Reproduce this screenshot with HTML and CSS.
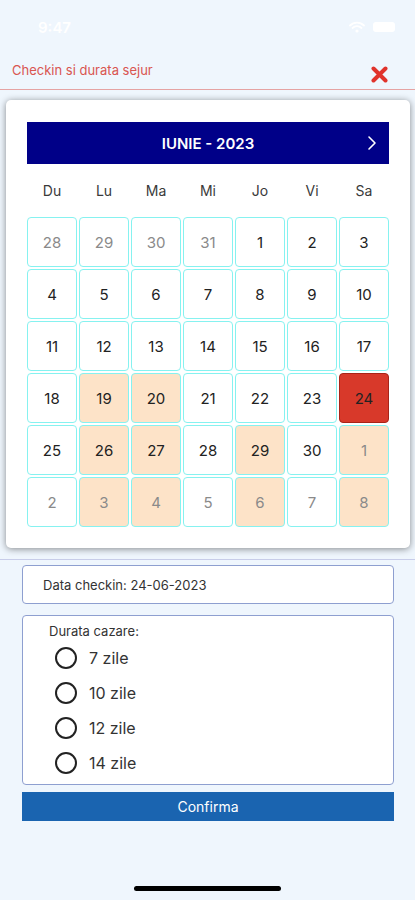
FILE: index.html
```html
<!DOCTYPE html>
<html lang="ro">
  <head>
    <meta charset="UTF-8" />
    <meta name="viewport" content="width=device-width, initial-scale=1.0" />
    <title>Checkin si durata sejur</title>
    <link rel="stylesheet" href="styles.css">
  </head>
  <body>
    <div class="status-bar">
      <span class="time">9:47</span>
      <span class="status-icons">
        <svg width="16" height="12" viewBox="0 0 16 12">
          <path d="M1 4.5a10 10 0 0 1 14 0M3.5 7a6.5 6.5 0 0 1 9 0" fill="none" stroke="#fff" stroke-width="1.8" stroke-linecap="round"/>
          <circle cx="8" cy="10" r="1.6" fill="#fff"/>
        </svg>
        <span class="battery"></span>
      </span>
    </div>

    <div class="top-bar">
      <span class="title">Checkin si durata sejur</span>
      <svg class="close" width="17" height="17" viewBox="0 0 17 17">
        <path d="M2.5 2.5l12 12M14.5 2.5l-12 12" stroke="#e0332c" stroke-width="4" stroke-linecap="round"/>
      </svg>
    </div>

    <div class="calendar-wrap">
      <div class="calendar">
        <div class="month-bar">
          <span>IUNIE - 2023</span>
          <svg class="next" width="10" height="16" viewBox="0 0 10 16">
            <path d="M2 2l6 6-6 6" fill="none" stroke="#fff" stroke-width="1.6" stroke-linecap="round" stroke-linejoin="round"/>
          </svg>
        </div>
        <div class="weekdays">
          <span>Du</span><span>Lu</span><span>Ma</span><span>Mi</span><span>Jo</span><span>Vi</span><span>Sa</span>
        </div>
        <div class="days">
          <div class="day other">28</div>
          <div class="day other">29</div>
          <div class="day other">30</div>
          <div class="day other">31</div>
          <div class="day">1</div>
          <div class="day">2</div>
          <div class="day">3</div>

          <div class="day">4</div>
          <div class="day">5</div>
          <div class="day">6</div>
          <div class="day">7</div>
          <div class="day">8</div>
          <div class="day">9</div>
          <div class="day">10</div>

          <div class="day">11</div>
          <div class="day">12</div>
          <div class="day">13</div>
          <div class="day">14</div>
          <div class="day">15</div>
          <div class="day">16</div>
          <div class="day">17</div>

          <div class="day">18</div>
          <div class="day busy">19</div>
          <div class="day busy">20</div>
          <div class="day">21</div>
          <div class="day">22</div>
          <div class="day">23</div>
          <div class="day selected">24</div>

          <div class="day">25</div>
          <div class="day busy">26</div>
          <div class="day busy">27</div>
          <div class="day">28</div>
          <div class="day busy">29</div>
          <div class="day">30</div>
          <div class="day busy other">1</div>

          <div class="day other">2</div>
          <div class="day busy other">3</div>
          <div class="day busy other">4</div>
          <div class="day other">5</div>
          <div class="day busy other">6</div>
          <div class="day other">7</div>
          <div class="day busy other">8</div>
        </div>
      </div>
    </div>

    <div class="form">
      <div class="box checkin">Data checkin: 24-06-2023</div>

      <div class="box duration">
        <div class="duration-label">Durata cazare:</div>
        <label class="option"><span class="radio"></span>7 zile</label>
        <label class="option"><span class="radio"></span>10 zile</label>
        <label class="option"><span class="radio"></span>12 zile</label>
        <label class="option"><span class="radio"></span>14 zile</label>
      </div>

      <button class="confirm">Confirma</button>
    </div>

    <div class="home-indicator"></div>
  </body>
</html>
```

FILE: styles.css
```css
:root {
  --page-bg: #eff6fd;
  --navy: #000088;
  --cell-border: #86f2f0;
  --busy: #fde3c8;
  --red: #d8392a;
  --box-border: #8e9fd0;
}

body {
  margin: 0;
  height: 900px;
  display: flex;
  flex-direction: column;
  background-color: var(--page-bg);
  font-family: Inter, "Noto Sans", sans-serif;
  color: #222;
}

/* Status bar */
.status-bar {
  height: 54px;
  display: flex;
  align-items: center;
  justify-content: space-between;
  padding: 0 20px 0 38px;
  box-sizing: border-box;
  color: #fff;
}

.time {
  font-size: 15px;
  font-weight: 600;
}

.status-icons {
  display: flex;
  align-items: center;
  gap: 8px;
}

.battery {
  width: 22px;
  height: 10px;
  border-radius: 3px;
  background: #fff;
}

/* Top bar */
.top-bar {
  height: 35px;
  display: flex;
  align-items: center;
  justify-content: space-between;
  padding: 0 27px 0 12px;
  border-bottom: 1px solid #e5a3a3;
}

.title {
  font-size: 13px;
  color: #d95550;
  margin-top: -3px;
}

.close {
  margin-top: 6px;
}

/* Calendar */
.calendar-wrap {
  padding: 10px 5px 11px 6px;
  border-bottom: 1px solid #c8cde9;
}

.calendar {
  background: #fff;
  border-radius: 5px;
  box-shadow: 0 1px 7px rgba(0, 0, 0, 0.45);
  padding: 22px 21px 21px 21px;
}

.month-bar {
  height: 42px;
  background: var(--navy);
  color: #fff;
  font-size: 15px;
  font-weight: 600;
  display: flex;
  align-items: center;
  justify-content: center;
  position: relative;
}

.next {
  position: absolute;
  right: 12px;
  top: 13px;
}

.weekdays {
  height: 53px;
  display: grid;
  grid-template-columns: repeat(7, 1fr);
  gap: 2px;
  align-items: center;
  text-align: center;
  font-size: 14px;
  color: #3a3a3a;
}

.days {
  display: grid;
  grid-template-columns: repeat(7, 1fr);
  grid-auto-rows: 50px;
  gap: 2px;
}

.day {
  display: flex;
  align-items: center;
  justify-content: center;
  border: 1px solid var(--cell-border);
  border-radius: 4px;
  font-size: 15px;
  color: #222;
}

.day.other {
  color: #8a8a8a;
}

.day.busy {
  background: var(--busy);
}

.day.selected {
  background: var(--red);
  border-color: #a82418;
}

/* Form */
.form {
  padding: 5px 21px 0 22px;
  display: flex;
  flex-direction: column;
}

.box {
  background: #fff;
  border: 1px solid var(--box-border);
  border-radius: 4px;
}

.checkin {
  height: 37px;
  display: flex;
  align-items: center;
  padding-left: 20px;
  font-size: 13px;
  color: #333;
}

.duration {
  margin-top: 11px;
  height: 168px;
  padding-left: 26px;
}

.duration-label {
  font-size: 13px;
  color: #333;
  margin-top: 7px;
  height: 16px;
}

.option {
  height: 35px;
  display: flex;
  align-items: center;
  gap: 12px;
  margin-left: 6px;
  font-size: 16px;
  color: #333;
}

.option:first-of-type {
  margin-top: 1px;
}

.radio {
  width: 18px;
  height: 18px;
  border: 2px solid #222;
  border-radius: 50%;
}

.confirm {
  margin-top: 7px;
  height: 29px;
  border: none;
  background: #1a64b0;
  color: #fff;
  font-family: inherit;
  font-size: 14px;
}

.home-indicator {
  margin: auto auto 9px auto;
  width: 147px;
  height: 5px;
  border-radius: 3px;
  background: #000;
}
```
